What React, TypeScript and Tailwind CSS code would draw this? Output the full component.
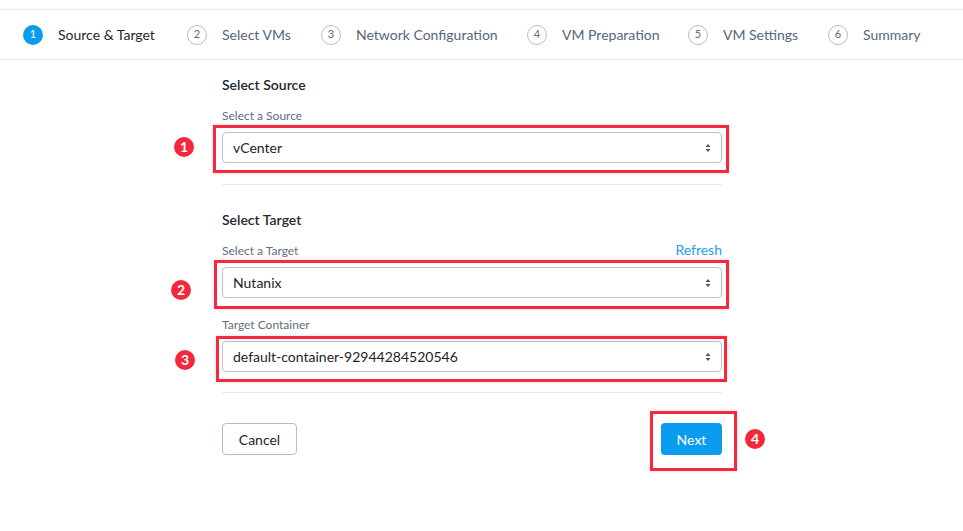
import React from "react";

const steps = [
  { label: "Source & Target", w: "w-[99px]" },
  { label: "Select VMs", w: "w-[69px]" },
  { label: "Network Configuration", w: "w-[141px]" },
  { label: "VM Preparation", w: "w-[96px]" },
  { label: "VM Settings", w: "w-[75px]" },
  { label: "Summary", w: "w-[58px]" },
];

function Arrows() {
  return (
    <svg width="6" height="10" viewBox="0 0 6 10" className="shrink-0">
      <path d="M3 1 L5.5 4 L0.5 4 Z" fill="#4a5666" />
      <path d="M3 9 L5.5 6 L0.5 6 Z" fill="#4a5666" />
    </svg>
  );
}

function Badge({ n, className }: { n: number; className: string }) {
  return (
    <div
      className={`absolute flex h-[20px] w-[20px] items-center justify-center rounded-full bg-[#f2283d] text-[14px] font-bold leading-none text-white ${className}`}
    >
      {n}
    </div>
  );
}

function SelectBox({ value }: { value: string }) {
  return (
    <div className="flex h-[31px] w-full items-center justify-between rounded-[4px] border border-[#b9c1cc] bg-white pl-[10px] pr-[10px] text-[14px] text-[#1f2328]">
      <span>{value}</span>
      <Arrows />
    </div>
  );
}

export default function App() {
  return (
    <div
      className="min-h-[531px] w-[963px] bg-white"
      style={{ fontFamily: "Lato, 'Open Sans', sans-serif" }}
    >
      <div className="pt-[9px]">
        <div className="flex h-[51px] items-center border-y border-[#e8ebee] pl-[23px]">
          {steps.map((s, i) => (
            <div key={s.label} className="mr-[30px] flex items-center">
              <div
                className={
                  i === 0
                    ? "flex h-[20px] w-[20px] items-center justify-center rounded-full bg-[#0b9cf0] text-[11px] text-white"
                    : "flex h-[20px] w-[20px] items-center justify-center rounded-full border border-[#b4bdc7] text-[11px] text-[#5b6b80]"
                }
              >
                {i + 1}
              </div>
              <span
                className={
                  i === 0
                    ? `ml-[15px] whitespace-nowrap text-[14px] text-[#22272e] ${s.w}`
                    : `ml-[15px] whitespace-nowrap text-[14px] text-[#56667a] ${s.w}`
                }
              >
                {s.label}
              </span>
            </div>
          ))}
        </div>
      </div>

      <div className="ml-[222px] w-[500px] pt-[15px]">
        <div className="h-[20px] text-[14px] font-semibold leading-[20px] text-[#22272e]">
          Select Source
        </div>
        <div className="mt-[13px] h-[16px] text-[12px] leading-[16px] text-[#5e6e80]">
          Select a Source
        </div>
        <div className="relative mt-[8px]">
          <div className="pointer-events-none absolute -bottom-[10px] -left-[9px] -right-[7px] -top-[7px] border-[3px] border-[#f4293e] shadow-[0_0_4px_rgba(0,0,0,0.15)]" />
          <Badge n={1} className="-left-[48px] top-[5px]" />
          <SelectBox value="vCenter" />
        </div>
        <div className="mt-[21px] h-px bg-[#e6e9ec]" />

        <div className="mt-[25px] h-[20px] text-[14px] font-semibold leading-[20px] text-[#22272e]">
          Select Target
        </div>
        <div className="mt-[13px] flex h-[16px] items-center justify-between text-[12px] leading-[16px] text-[#5e6e80]">
          <span>Select a Target</span>
          <span className="-mt-[3px] text-[14px] text-[#1ba2f0]">Refresh</span>
        </div>
        <div className="relative mt-[8px]">
          <div className="pointer-events-none absolute -bottom-[11px] -left-[8px] -right-[7px] -top-[7px] border-[3px] border-[#f4293e] shadow-[0_0_4px_rgba(0,0,0,0.15)]" />
          <Badge n={2} className="-left-[51px] top-[13px]" />
          <SelectBox value="Nutanix" />
        </div>
        <div className="mt-[19px] h-[16px] text-[12px] leading-[16px] text-[#5e6e80]">
          Target Container
        </div>
        <div className="relative mt-[8px]">
          <div className="pointer-events-none absolute -bottom-[10px] -left-[6px] -right-[5px] -top-[5px] border-[3px] border-[#f4293e] shadow-[0_0_4px_rgba(0,0,0,0.15)]" />
          <Badge n={3} className="-left-[47px] top-[9px]" />
          <SelectBox value="default-container-92944284520546" />
        </div>
        <div className="mt-[20px] h-px bg-[#e6e9ec]" />

        <div className="mt-[30px] flex items-center justify-between">
          <button className="h-[32px] w-[75px] rounded-[4px] border border-[#b4bdc7] bg-white text-[14px] text-[#22272e]">
            Cancel
          </button>
          <div className="relative">
            <div className="pointer-events-none absolute -bottom-[16px] -left-[11px] -right-[15px] -top-[12px] border-[3px] border-[#f4293e] shadow-[0_0_4px_rgba(0,0,0,0.15)]" />
            <Badge n={4} className="-right-[43px] top-[6px]" />
            <button className="h-[32px] w-[61px] rounded-[4px] bg-[#0b9cf0] text-[14px] text-white">
              Next
            </button>
          </div>
        </div>
      </div>
    </div>
  );
}
